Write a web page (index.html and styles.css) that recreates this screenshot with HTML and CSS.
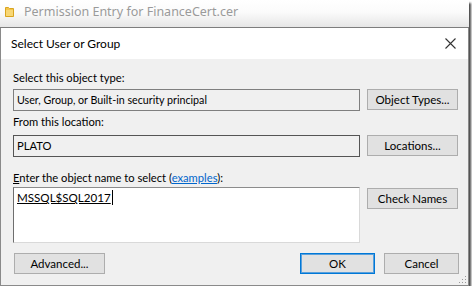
FILE: index.html
```html
<!DOCTYPE html>
<html>
<head>
<meta charset="utf-8">
<link rel="stylesheet" href="styles.css">
</head>
<body>
<div class="shot">
  <div class="parent-bar">
    <svg class="folder" width="9" height="11" viewBox="0 0 9 11">
      <path d="M0.5 1.5 L3.5 1.5 L4.5 2.5 L8.5 2.5 L8.5 10.5 L0.5 10.5 Z" fill="#f3c44a" stroke="#d9a520" stroke-width="1"/>
      <rect x="1" y="4" width="7" height="6" fill="#f8d775"/>
    </svg>
    <span class="parent-title">Permission Entry for FinanceCert.cer</span>
  </div>
  <div class="dialog">
    <div class="dlg-title">
      <span>Select User or Group</span>
      <svg class="close" width="11" height="11" viewBox="0 0 11 11">
        <path d="M0.5 0.5 L10.5 10.5 M10.5 0.5 L0.5 10.5" stroke="#333" stroke-width="1.1" fill="none"/>
      </svg>
    </div>
    <div class="dlg-body">
      <div class="label l1">Select this object type:</div>
      <div class="row">
        <div class="field ro">User, Group, or Built-in security principal</div>
        <button class="btn">Object Types...</button>
      </div>
      <div class="label l2">From this location:</div>
      <div class="row">
        <div class="field ro dark">PLATO</div>
        <button class="btn">Locations...</button>
      </div>
      <div class="label l3"><u>E</u>nter the object name to select (<a class="link">examples</a>):</div>
      <div class="row">
        <div class="field area"><span class="name">MSSQL$SQL2017</span><span class="caret"></span></div>
        <button class="btn top">Check Names</button>
      </div>
      <div class="footer">
        <button class="btn adv">Advanced...</button>
        <div class="spacer"></div>
        <button class="btn small primary">OK</button>
        <button class="btn small">Cancel</button>
      </div>
      <svg class="grip" width="8" height="8" viewBox="0 0 8 8">
        <rect x="6" y="0" width="1" height="1" fill="#999"/>
        <rect x="3" y="3" width="1" height="1" fill="#999"/>
        <rect x="6" y="3" width="1" height="1" fill="#999"/>
        <rect x="0" y="6" width="1" height="1" fill="#999"/>
        <rect x="3" y="6" width="1" height="1" fill="#999"/>
        <rect x="6" y="6" width="1" height="1" fill="#999"/>
      </svg>
    </div>
  </div>
</div>
</body>
</html>
```

FILE: styles.css
```css
html, body {
  margin: 0;
  padding: 0;
  background: #ffffff;
}
body {
  font-family: Lato, "Noto Sans", "Liberation Sans", sans-serif;
  font-size: 11.2px;
  color: #000;
}
.shot {
  width: 469px;
  height: 286px;
  display: flex;
  flex-direction: column;
  box-shadow: 2px 3px 2px rgba(40, 40, 40, 0.85);
  background: #f0f0f0;
}
.parent-bar {
  height: 27px;
  border-bottom: 1px solid #7d7d7d;
  background: linear-gradient(#ffffff, #fbfbfb 45%, #e6e6e6);
  display: flex;
  align-items: center;
  padding-left: 5px;
  box-sizing: content-box;
}
.folder {
  margin-top: -4px;
}
.parent-title {
  margin-left: 10px;
  margin-top: -5px;
  font-family: "Noto Sans", sans-serif;
  font-size: 12.5px;
  color: #9a9a9a;
}
.dialog {
  flex: 1;
  display: flex;
  flex-direction: column;
  border-left: 1px solid #8a8a8a;
  border-right: 1px solid #8a8a8a;
  border-bottom: 1px solid #8a8a8a;
  background: #f0f0f0;
}
.dlg-title {
  height: 31px;
  background: #ffffff;
  display: flex;
  align-items: center;
  justify-content: space-between;
  padding-left: 10px;
  padding-right: 12px;
  font-size: 12px;
}
.dlg-body {
  flex: 1;
  position: relative;
  display: flex;
  flex-direction: column;
  padding: 11px 9px 8px 12px;
}
.label {
  height: 16px;
  line-height: 16px;
  white-space: nowrap;
}
.l1 { margin-bottom: 3px; }
.l2 { margin-top: 3px; margin-bottom: 5px; }
.l3 { margin-top: 13px; margin-bottom: 1px; }
.link {
  color: #0066cc;
  text-decoration: underline;
}
.row {
  display: flex;
  gap: 7px;
  align-items: flex-start;
}
.field {
  width: 347px;
  height: 22px;
  box-sizing: border-box;
  border: 1px solid #7f7f7f;
  background: #f0f0f0;
  padding-left: 3px;
  line-height: 20px;
  white-space: nowrap;
  font-size: 10.7px;
}
.field.dark {
  border-color: #555;
  font-size: 11.2px;
}
.field.area {
  height: 56px;
  background: #ffffff;
  border-color: #8c8c8c #d9d9d9 #d9d9d9 #6e6e6e;
  padding-top: 2px;
  display: flex;
  align-items: flex-start;
  font-size: 11.6px;
}
.name {
  text-decoration: underline;
  line-height: 16px;
}
.caret {
  width: 1px;
  height: 15px;
  background: #000;
  margin-left: 1px;
}
.btn {
  width: 91px;
  height: 21px;
  box-sizing: border-box;
  border: 1px solid #adadad;
  background: #e1e1e1;
  font-family: inherit;
  font-size: 11.5px;
  color: #000;
  padding: 0;
  margin-top: 0;
}
.btn.top {
  margin-top: 1px;
}
.footer {
  display: flex;
  margin-top: 10px;
  gap: 9px;
}
.btn.adv {
  margin-left: 1px;
}
.spacer {
  flex: 1;
}
.btn.small {
  width: 75px;
}
.btn.primary {
  border: 1px solid #0078d7;
  box-shadow: inset 0 0 0 1px #5aa0dc;
}
.grip {
  position: absolute;
  right: 1px;
  bottom: 1px;
}
```
